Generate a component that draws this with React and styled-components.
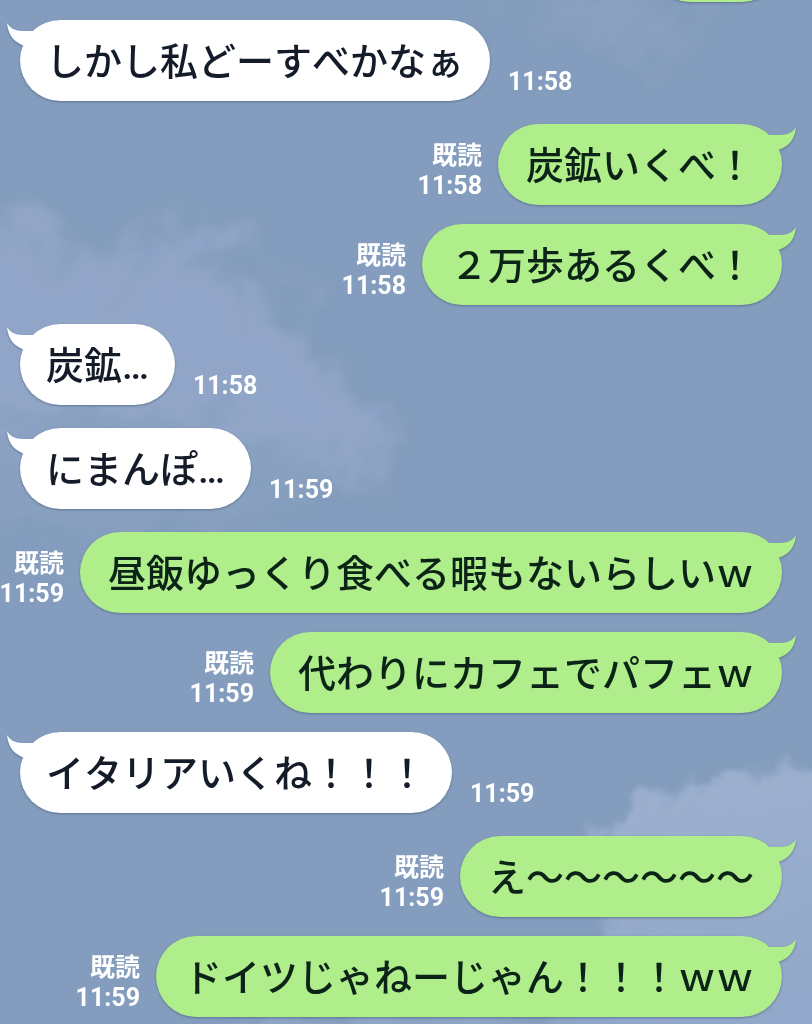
import React from "react";
import styled, { createGlobalStyle } from "styled-components";

const messages = [
  { id: 1, text: "しかし私どーすべかなぁ", time: "11:58" },
  { id: 2, text: "炭鉱いくべ！", time: "11:58", sent: true },
  { id: 3, text: "２万歩あるくべ！", time: "11:58", sent: true },
  { id: 4, text: "炭鉱…", time: "11:58" },
  { id: 5, text: "にまんぽ…", time: "11:59" },
  { id: 6, text: "昼飯ゆっくり食べる暇もないらしいｗ", time: "11:59", sent: true },
  { id: 7, text: "代わりにカフェでパフェｗ", time: "11:59", sent: true },
  { id: 8, text: "イタリアいくね！！！", time: "11:59" },
  { id: 9, text: "え～～～～～～", time: "11:59", sent: true },
  { id: 10, text: "ドイツじゃねーじゃん！！！ｗｗ", time: "11:59", sent: true },
];

const Sky = () => (
  <Wallpaper
    viewBox="0 0 812 1024"
    preserveAspectRatio="xMidYMid slice"
    aria-hidden="true"
  >
    <defs>
      <filter id="cloud" x="-20%" y="-20%" width="140%" height="140%">
        <feGaussianBlur in="SourceGraphic" stdDeviation="12" result="soft" />
        <feTurbulence
          type="fractalNoise"
          baseFrequency="0.02"
          numOctaves="6"
          seed="4"
        />
        <feDisplacementMap
          in="soft"
          scale="110"
          xChannelSelector="R"
          yChannelSelector="G"
        />
        <feGaussianBlur stdDeviation="2" />
      </filter>
      <filter id="edge" x="-20%" y="-20%" width="140%" height="140%">
        <feGaussianBlur in="SourceGraphic" stdDeviation="5" result="soft" />
        <feTurbulence
          type="fractalNoise"
          baseFrequency="0.03"
          numOctaves="6"
          seed="12"
        />
        <feDisplacementMap
          in="soft"
          scale="44"
          xChannelSelector="R"
          yChannelSelector="G"
        />
        <feGaussianBlur stdDeviation="1" />
      </filter>
      <linearGradient id="fade" x1="0" y1="0" x2="0" y2="1">
        <stop offset="0" stopColor="#9db0cf" />
        <stop offset="1" stopColor="#8fa5c8" />
      </linearGradient>
    </defs>
    <g filter="url(#cloud)" fill="#95a8ca">
      <path
        opacity="0.8"
        d="M-80 235 C0 225 50 228 75 248 C85 270 110 275 140 262 C150 230 190 228 225 245 C255 265 262 300 285 318 C320 335 325 360 345 385 C375 410 385 440 370 480 C330 480 290 440 250 425 C170 405 60 430 -80 420 Z"
      />
      <path opacity="0.3" d="M-80 400 L260 410 L340 480 L200 530 L-80 540 Z" />
      <path opacity="0.4" d="M500 10 C570 -10 650 0 710 25 C670 55 560 45 500 10 Z" />
    </g>
    <g filter="url(#edge)">
      <path
        fill="url(#fade)"
        d="M570 855 C590 832 608 828 616 808 C634 788 662 800 680 792 C700 772 740 774 780 770 L900 774 L900 1080 L600 1080 C600 1000 640 960 590 900 Z"
      />
      <path
        fill="#93a8ca"
        opacity="0.7"
        d="M220 1026 L420 1014 L900 1014 L900 1080 L220 1080 Z"
      />
    </g>
  </Wallpaper>
);

const Message = ({ text, time, sent }) => (
  <Row $sent={sent}>
    <Bubble $sent={sent}>
      <Tail $sent={sent} viewBox="0 0 28 24" aria-hidden="true">
        <path d="M0 0 C3 5 8 8 16 8 L27 8 L27 24 L15 22 C6 18 1 11 0 0 Z" />
      </Tail>
      {text}
    </Bubble>
    <Meta $sent={sent}>
      {sent && <span>既読</span>}
      <time>{time}</time>
    </Meta>
  </Row>
);

const App = () => {
  return (
    <>
      <GlobalStyle />
      <Chat lang="ja">
        <Sky />
        <PreviousBubble />
        {messages.map((message) => (
          <Message key={message.id} {...message} />
        ))}
      </Chat>
    </>
  );
};

const GlobalStyle = createGlobalStyle`
  * {
    box-sizing: border-box;
  }
  body {
    margin: 0;
    background: #849dbe;
    font-family: Roboto, "Noto Sans CJK JP", sans-serif;
    font-kerning: none;
  }
`;

const Chat = styled.main`
  position: relative;
  display: flex;
  flex-direction: column;
  min-height: 100vh;
  padding: 0 30px 8px 20px;
  overflow: hidden;
  background: #849dbe;
`;

const Wallpaper = styled.svg`
  position: absolute;
  top: 0;
  left: 0;
  width: 100%;
  height: 100%;
`;

const Row = styled.div`
  position: relative;
  display: flex;
  flex-direction: ${({ $sent }) => ($sent ? "row-reverse" : "row")};
  align-items: flex-end;
  gap: ${({ $sent }) => ($sent ? "16px" : "18px")};
  margin-bottom: ${({ $sent }) => ($sent ? "19px" : "23px")};
  &:last-child {
    margin-bottom: 0;
  }
`;

const Bubble = styled.div`
  position: relative;
  flex-shrink: 0;
  height: 81px;
  padding: 0 ${({ $sent }) => ($sent ? "28px" : "26px")};
  border-radius: 41px;
  background: ${({ $sent }) => ($sent ? "#b0ee8b" : "#ffffff")};
  color: ${({ $sent }) => ($sent ? "#0c2418" : "#141c2a")};
  font-size: 38px;
  font-weight: 500;
  line-height: 84px;
  white-space: nowrap;
  filter: drop-shadow(0 1px 1px rgba(50, 75, 95, 0.5));
`;

/* end of an older message, scrolled out above the window */
const PreviousBubble = styled(Bubble).attrs({ $sent: true })`
  align-self: flex-end;
  width: 132px;
  margin: -79px 0 18px;
`;

const Tail = styled.svg`
  position: absolute;
  top: 3px;
  width: 28px;
  height: 24px;
  fill: ${({ $sent }) => ($sent ? "#b0ee8b" : "#ffffff")};
  ${({ $sent }) =>
    $sent ? "right: -14px; transform: scaleX(-1);" : "left: -13px;"}
`;

const Meta = styled.div`
  display: flex;
  flex-direction: column;
  flex-shrink: 0;
  align-items: ${({ $sent }) => ($sent ? "flex-end" : "flex-start")};
  padding-bottom: 4px;
  color: #ffffff;
  font-size: 25px;
  font-weight: 700;
  line-height: 30px;
  white-space: nowrap;
`;

export default App;
